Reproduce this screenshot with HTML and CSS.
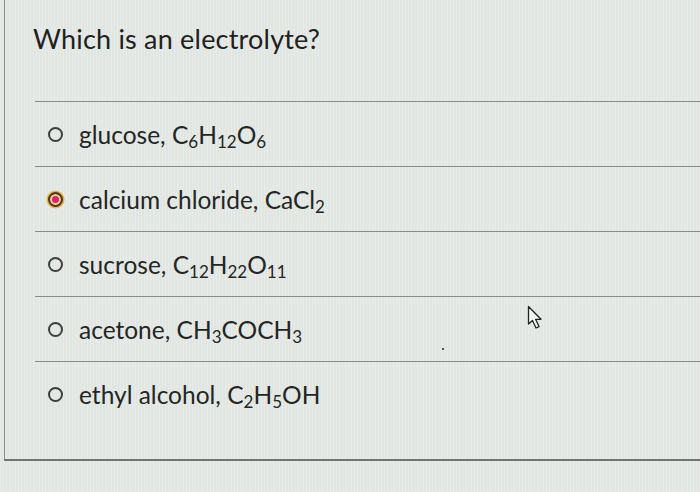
FILE: index.html
```html
<!DOCTYPE html>
<html>
<head>
<meta charset="utf-8">
<link rel="stylesheet" href="styles.css">
</head>
<body>
<div class="card">
  <h1 class="title">Which is an electrolyte?</h1>
  <ul class="options">
    <li class="option"><span class="radio"></span><span class="label">glucose, C<sub>6</sub>H<sub>12</sub>O<sub>6</sub></span></li>
    <li class="option"><span class="radio selected"></span><span class="label">calcium chloride, CaCl<sub>2</sub></span></li>
    <li class="option"><span class="radio"></span><span class="label">sucrose, C<sub>12</sub>H<sub>22</sub>O<sub>11</sub></span></li>
    <li class="option"><span class="radio"></span><span class="label">acetone, CH<sub>3</sub>COCH<sub>3</sub></span></li>
    <li class="option"><span class="radio"></span><span class="label">ethyl alcohol, C<sub>2</sub>H<sub>5</sub>OH</span></li>
  </ul>
</div>
<span class="speck"></span>
<svg class="cursor" width="18" height="26" viewBox="0 0 18 26"><path d="M1.5 1.5 L1.5 19 L5.5 15.5 L9 23 L12 21.6 L8.6 14.3 L14 14.3 Z" fill="#f4f6f4" stroke="#222" stroke-width="1.3" stroke-linejoin="round"/></svg>
</body>
</html>
```
FILE: styles.css
```css
html, body {
  margin: 0;
  padding: 0;
}
body {
  width: 700px;
  height: 492px;
  overflow: hidden;
  position: relative;
  background-color: #e2e6e2;
  background-image: repeating-linear-gradient(90deg, rgba(255,255,255,0.2) 0 1px, rgba(0,0,0,0) 1px 3px);
  font-family: Lato, "Liberation Sans", sans-serif;
  color: #1e2120;
}
.card {
  margin-left: 4px;
  height: 461px;
  box-sizing: border-box;
  border-left: 1px solid #8a8f8c;
  border-bottom: 2px solid #6f7471;
  padding-top: 23px;
}
.title {
  margin: 0 0 0 28px;
  font-size: 27px;
  font-weight: 400;
  line-height: 32px;
  height: 78px;
  letter-spacing: 0.2px;
}
.options {
  list-style: none;
  margin: 0 0 0 30px;
  padding: 0;
}
.option {
  height: 64px;
  border-top: 1px solid #868b88;
  display: flex;
  align-items: center;
  padding-left: 13px;
  gap: 16px;
  font-size: 24.5px;
  color: #232625;
}
.radio {
  width: 15px;
  height: 15px;
  box-sizing: border-box;
  border: 2px solid #3c3f3e;
  border-radius: 50%;
  flex: none;
}
.radio.selected {
  border: 2px solid #4a3a2a;
  background: #d6276e;
  box-shadow: 0 0 0 1.5px #e8b34a, inset 0 0 0 2px #f3d08a;
}
.label {
  line-height: 30px;
  position: relative;
  top: 1px;
}
sub {
  font-size: 17px;
  vertical-align: -4px;
  line-height: 0;
}
.speck {
  position: absolute;
  left: 442px;
  top: 348px;
  width: 2px;
  height: 2px;
  background: #222;
  border-radius: 50%;
}
.cursor {
  position: absolute;
  left: 527px;
  top: 305px;
}
```
